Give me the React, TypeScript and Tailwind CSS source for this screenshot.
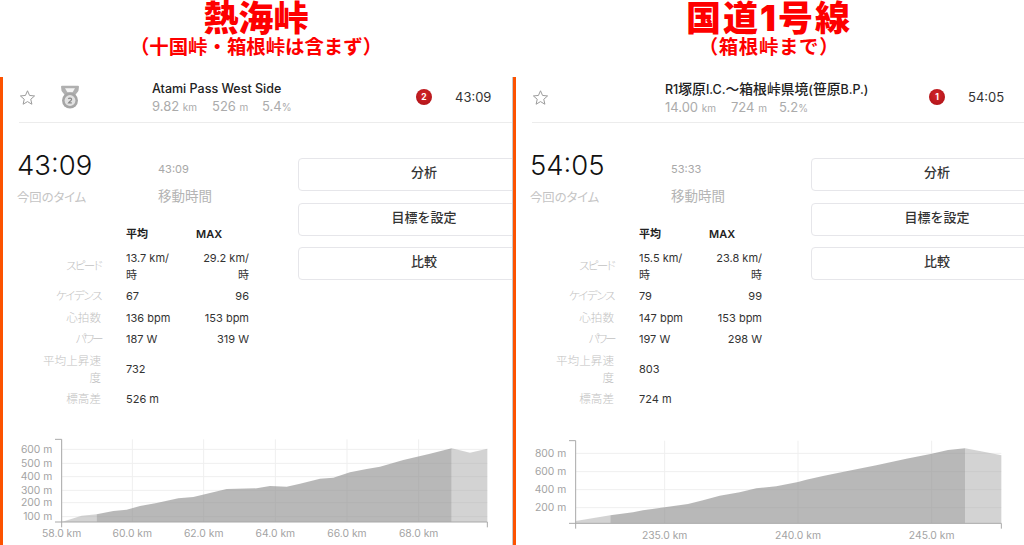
import React from "react";

type Row = { label: string; avg: string; max?: string; labelClass?: string };
type ChartData = {
  yTicks: { y: number; label: string }[];
  xTicks: { x: number; label: string }[];
  profile: [number, number][];
  x0: number;
  startX: number;
  endX: number;
  lastX: number;
  topY: number;
  baseY: number;
};
type Panel = {
  title: string;
  titleClass: string;
  subtitle: string;
  subtitleClass: string;
  name: React.ReactNode;
  dist: string;
  elev: string;
  grade: string;
  rank: string;
  time: string;
  moving: string;
  medal: boolean;
  rows: Row[];
  chart: ChartData;
  statGapA: string;
  statGapB: string;
};

const rankBg = "bg-[radial-gradient(circle_at_50%_40%,#d5262a,#a81015)]";

function Star() {
  return (
    <svg width="17" height="17" viewBox="0 0 24 24" fill="none" stroke="#9a9a9a" strokeWidth="1.4" strokeLinejoin="miter">
      <path d="M12 2.5l2.9 6.6 7.1.7-5.4 4.7 1.6 7-6.2-3.7-6.2 3.7 1.6-7L2 9.8l7.1-.7z" />
    </svg>
  );
}

function Medal() {
  return (
    <svg width="20" height="24" viewBox="0 0 20 24" fill="none">
      <path d="M1 1.800q0-1 1-1h16q1 0 1 1l-.6 4.200-4.400 5.500H6L1.600 6z" fill="#b0b0b0" />
      <path d="M5 3.200h10l-2.400 4h-5.200z" fill="#f4f4f4" />
      <circle cx="10" cy="15.500" r="8" fill="#a6a6a6" />
      <circle cx="10" cy="15.500" r="5.400" fill="#e2e2e2" />
      <path d="M8.400 14c.5-1.400 3.200-1.200 3.200.4 0 1.200-2 2-3 3.400h3.200" stroke="#8a8a8a" strokeWidth="1.200" fill="none" />
    </svg>
  );
}

function Chart({ c }: { c: ChartData }) {
  const pts = c.profile;
  const interp = (x: number) => {
    for (let i = 0; i < pts.length - 1; i++) {
      const [a, b] = pts[i];
      const [d, e] = pts[i + 1];
      if (x >= a && x <= d) return b + ((e - b) * (x - a)) / (d - a);
    }
    return c.baseY;
  };
  const section = (from: number, to: number) => {
    const inner = pts.filter(([x]) => x > from && x < to);
    const all: [number, number][] = [[from, interp(from)], ...inner, [to, interp(to)]];
    return `${from},${c.baseY} ` + all.map(p => p.join(",")).join(" ") + ` ${to},${c.baseY}`;
  };
  return (
    <svg width="512" height="115" viewBox="0 0 1536 345" className="block">
      {c.yTicks.map(t => (
        <line key={t.y} x1={c.x0} x2={c.lastX} y1={t.y} y2={t.y} stroke="#efefef" strokeWidth="3" />
      ))}
      {c.xTicks.map(t => (
        <line key={t.x} x1={t.x} x2={t.x} y1={c.topY} y2={c.baseY} stroke="#efefef" strokeWidth="3" />
      ))}
      <polygon points={section(c.x0, c.startX)} fill="#a8a8a8" fillOpacity="0.5" />
      <polygon points={section(c.startX, c.endX)} fill="#8c8c8c" fillOpacity="0.62" />
      <polygon points={section(c.endX, c.lastX)} fill="#a8a8a8" fillOpacity="0.5" />
      <path
        d={`M${c.x0 - 20} ${c.topY}H${c.x0}V${c.baseY}M${c.x0 - 20} ${c.baseY}H${c.lastX}V${c.baseY + 16}M${c.x0} ${c.baseY}V${c.baseY + 16}`}
        stroke="#a9a9a9"
        strokeWidth="3"
        fill="none"
      />
      {c.yTicks.map(t => (
        <text key={t.label} x={c.x0 - 28} y={t.y + 11} textAnchor="end" fontSize="31" fill="#a3a3a3">
          {t.label}
        </text>
      ))}
      {c.xTicks.map(t => (
        <text key={t.label} x={t.x} y={c.baseY + 46} textAnchor="middle" fontSize="31" fill="#a3a3a3">
          {t.label}
        </text>
      ))}
    </svg>
  );
}

function PanelView({ p }: { p: Panel }) {
  return (
    <div className="w-[512px] shrink-0 h-[545px] overflow-hidden">
      <div className="h-[77px] flex flex-col items-center text-[#fe0000] font-bold">
        <div className={`text-[35px] leading-[36px] font-black ${p.titleClass}`}>{p.title}</div>
        <div className={`text-[19.4px] leading-[22px] ${p.subtitleClass}`}>{p.subtitle}</div>
      </div>
      <div className="border-l-[3px] border-[#fc5200] h-[468px] pl-[16px] overflow-hidden">
        <div className="h-[46px] pb-[5px] flex items-center border-b border-[#ececec] w-[520px]">
          <div className="w-[41px] flex"><Star /></div>
          <div className="w-[92px] flex">{p.medal ? <Medal /> : null}</div>
          <div className="w-[264px] mt-[2px]">
            <div className="text-[12.5px] leading-[16px] text-[#222] font-medium whitespace-nowrap">{p.name}</div>
            <div className="text-[13px] leading-[16px] mt-[1px] text-[#ababab] flex">
              <span className={p.statGapA}>{p.dist} <span className="text-[10px]">km</span></span>
              <span className={p.statGapB}>{p.elev} <span className="text-[10px]">m</span></span>
              <span>{p.grade}<span className="text-[10px]">%</span></span>
            </div>
          </div>
          <div className={`w-[16px] h-[16px] rounded-full ${rankBg} text-white text-[8.5px] font-bold flex items-center justify-center`}>{p.rank}</div>
          <div className="ml-[23px] mt-[2px] text-[13px] text-[#333]">{p.time}</div>
        </div>
        <div className="flex">
          <div className="w-[279px] shrink-0">
            <div className="flex mt-[24px] -ml-[2px]">
              <div className="w-[141px]">
                <div className="text-[27.5px] leading-[36px] font-light text-[#111]">{p.time}</div>
                <div className="text-[12.3px] leading-[20px] mt-[5px] text-[#c4c4c4] [font-feature-settings:'palt']">今回のタイム</div>
              </div>
              <div>
                <div className="text-[11px] leading-[14px] mt-[15px] text-[#a8a8a8]">{p.moving}</div>
                <div className="text-[13.5px] leading-[20px] mt-[10px] text-[#b4b4b4]">移動時間</div>
              </div>
            </div>
            <table className="mt-[14.5px] border-collapse text-[11px] leading-[17.4px] text-[#333]">
              <thead>
                <tr className="h-[25px]">
                  <th className="w-[82px]" />
                  <th className="w-[25px]" />
                  <th className="w-[50px] text-left font-semibold text-[#222]">平均</th>
                  <th className="w-[73px] text-left font-semibold text-[#222] pl-[20px]">MAX</th>
                </tr>
              </thead>
              <tbody>
                {p.rows.map(r => (
                  <tr key={r.label}>
                    <td className={`text-right text-[11.6px] text-[#c2c2c2] font-light py-[2px] pl-[22px] [font-feature-settings:'palt'] ${r.labelClass ?? ""}`}>{r.label}</td>
                    <td />
                    <td className="py-[2px]">{r.avg}</td>
                    <td className="py-[2px] pl-[25px] text-right">{r.max ?? ""}</td>
                  </tr>
                ))}
              </tbody>
            </table>
          </div>
          <div className="w-[252px] shrink-0 flex flex-col gap-[11.5px] mt-[35px]">
            {["分析", "目標を設定", "比較"].map(b => (
              <div key={b} className="h-[33px] pb-[3px] border border-[#e6e6ea] rounded-[4px] flex items-center justify-center text-[13px] font-medium text-[#333]">
                {b}
              </div>
            ))}
          </div>
        </div>
        <div className="-ml-[19px] mt-[19px]">
          <Chart c={p.chart} />
        </div>
      </div>
    </div>
  );
}

const cjk = "text-[13.8px]";
const kanaA = "tracking-[-1.7px]";
const kanaB = "tracking-[-1.4px]";
const kanaC = "tracking-[-2.4px]";

const left: Panel = {
  title: "熱海峠",
  titleClass: "",
  subtitle: "（十国峠・箱根峠は含まず）",
  subtitleClass: "",
  name: "Atami Pass West Side",
  dist: "9.82",
  elev: "526",
  grade: "5.4",
  rank: "2",
  time: "43:09",
  moving: "43:09",
  medal: true,
  statGapA: "w-[60px]",
  statGapB: "w-[50px]",
  rows: [
    { label: "スピード", avg: "13.7 km/時", max: "29.2 km/時", labelClass: kanaA },
    { label: "ケイデンス", avg: "67", max: "96", labelClass: kanaB },
    { label: "心拍数", avg: "136 bpm", max: "153 bpm" },
    { label: "パワー", avg: "187 W", max: "319 W", labelClass: kanaC },
    { label: "平均上昇速度", avg: "732" },
    { label: "標高差", avg: "526 m" },
  ],
  chart: {
    x0: 185,
    startX: 290,
    endX: 1355,
    lastX: 1462,
    topY: 28,
    baseY: 276,
    yTicks: [
      { y: 58, label: "600 m" },
      { y: 100, label: "500 m" },
      { y: 140, label: "400 m" },
      { y: 181, label: "300 m" },
      { y: 218, label: "200 m" },
      { y: 260, label: "100 m" },
    ],
    xTicks: [
      { x: 185, label: "58.0 km" },
      { x: 397, label: "60.0 km" },
      { x: 611, label: "62.0 km" },
      { x: 826, label: "64.0 km" },
      { x: 1041, label: "66.0 km" },
      { x: 1256, label: "68.0 km" },
    ],
    profile: [
      [185, 276], [245, 257], [290, 253], [340, 243], [380, 239], [420, 228], [470, 219], [535, 205], [580, 201],
      [630, 189], [680, 177], [770, 175], [810, 168], [860, 170], [900, 161], [960, 146], [1000, 143], [1050, 127],
      [1100, 117], [1140, 110], [1210, 90], [1290, 71], [1355, 55], [1410, 68], [1462, 56],
    ],
  },
};

const right: Panel = {
  title: "国道1号線",
  titleClass: "tracking-[2px]",
  subtitle: "（箱根峠まで）",
  subtitleClass: "tracking-[0.7px]",
  name: (
    <>
      R1<span className={cjk}>塚原</span>I.C.<span className={cjk}>～箱根峠県境</span>(<span className={cjk}>笹原</span>B.P.)
    </>
  ),
  dist: "14.00",
  elev: "724",
  grade: "5.2",
  rank: "1",
  time: "54:05",
  moving: "53:33",
  medal: false,
  statGapA: "w-[66px]",
  statGapB: "w-[48px]",
  rows: [
    { label: "スピード", avg: "15.5 km/時", max: "23.8 km/時", labelClass: kanaA },
    { label: "ケイデンス", avg: "79", max: "99", labelClass: kanaB },
    { label: "心拍数", avg: "147 bpm", max: "153 bpm" },
    { label: "パワー", avg: "197 W", max: "298 W", labelClass: kanaC },
    { label: "平均上昇速度", avg: "803" },
    { label: "標高差", avg: "724 m" },
  ],
  chart: {
    x0: 188,
    startX: 292,
    endX: 1356,
    lastX: 1465,
    topY: 32,
    baseY: 280,
    yTicks: [
      { y: 70, label: "800 m" },
      { y: 125, label: "600 m" },
      { y: 179, label: "400 m" },
      { y: 233, label: "200 m" },
    ],
    xTicks: [
      { x: 455, label: "235.0 km" },
      { x: 855, label: "240.0 km" },
      { x: 1256, label: "245.0 km" },
    ],
    profile: [
      [188, 273], [292, 256], [360, 247], [390, 241], [455, 232], [525, 222], [570, 211], [620, 197], [680, 187],
      [730, 175], [790, 169], [855, 156], [880, 149], [930, 138], [1000, 124], [1090, 106], [1180, 86], [1256, 71],
      [1305, 60], [1356, 55], [1400, 63], [1465, 76],
    ],
  },
};

export default function App() {
  return (
    <div className="w-[1024px] h-[545px] overflow-hidden bg-white flex font-['Inter','Noto_Sans_CJK_JP',sans-serif]">
      <PanelView p={left} />
      <div className="w-[1px] shrink-0 h-[468px] mt-[77px] bg-[#c8c8c8]" />
      <PanelView p={right} />
    </div>
  );
}
